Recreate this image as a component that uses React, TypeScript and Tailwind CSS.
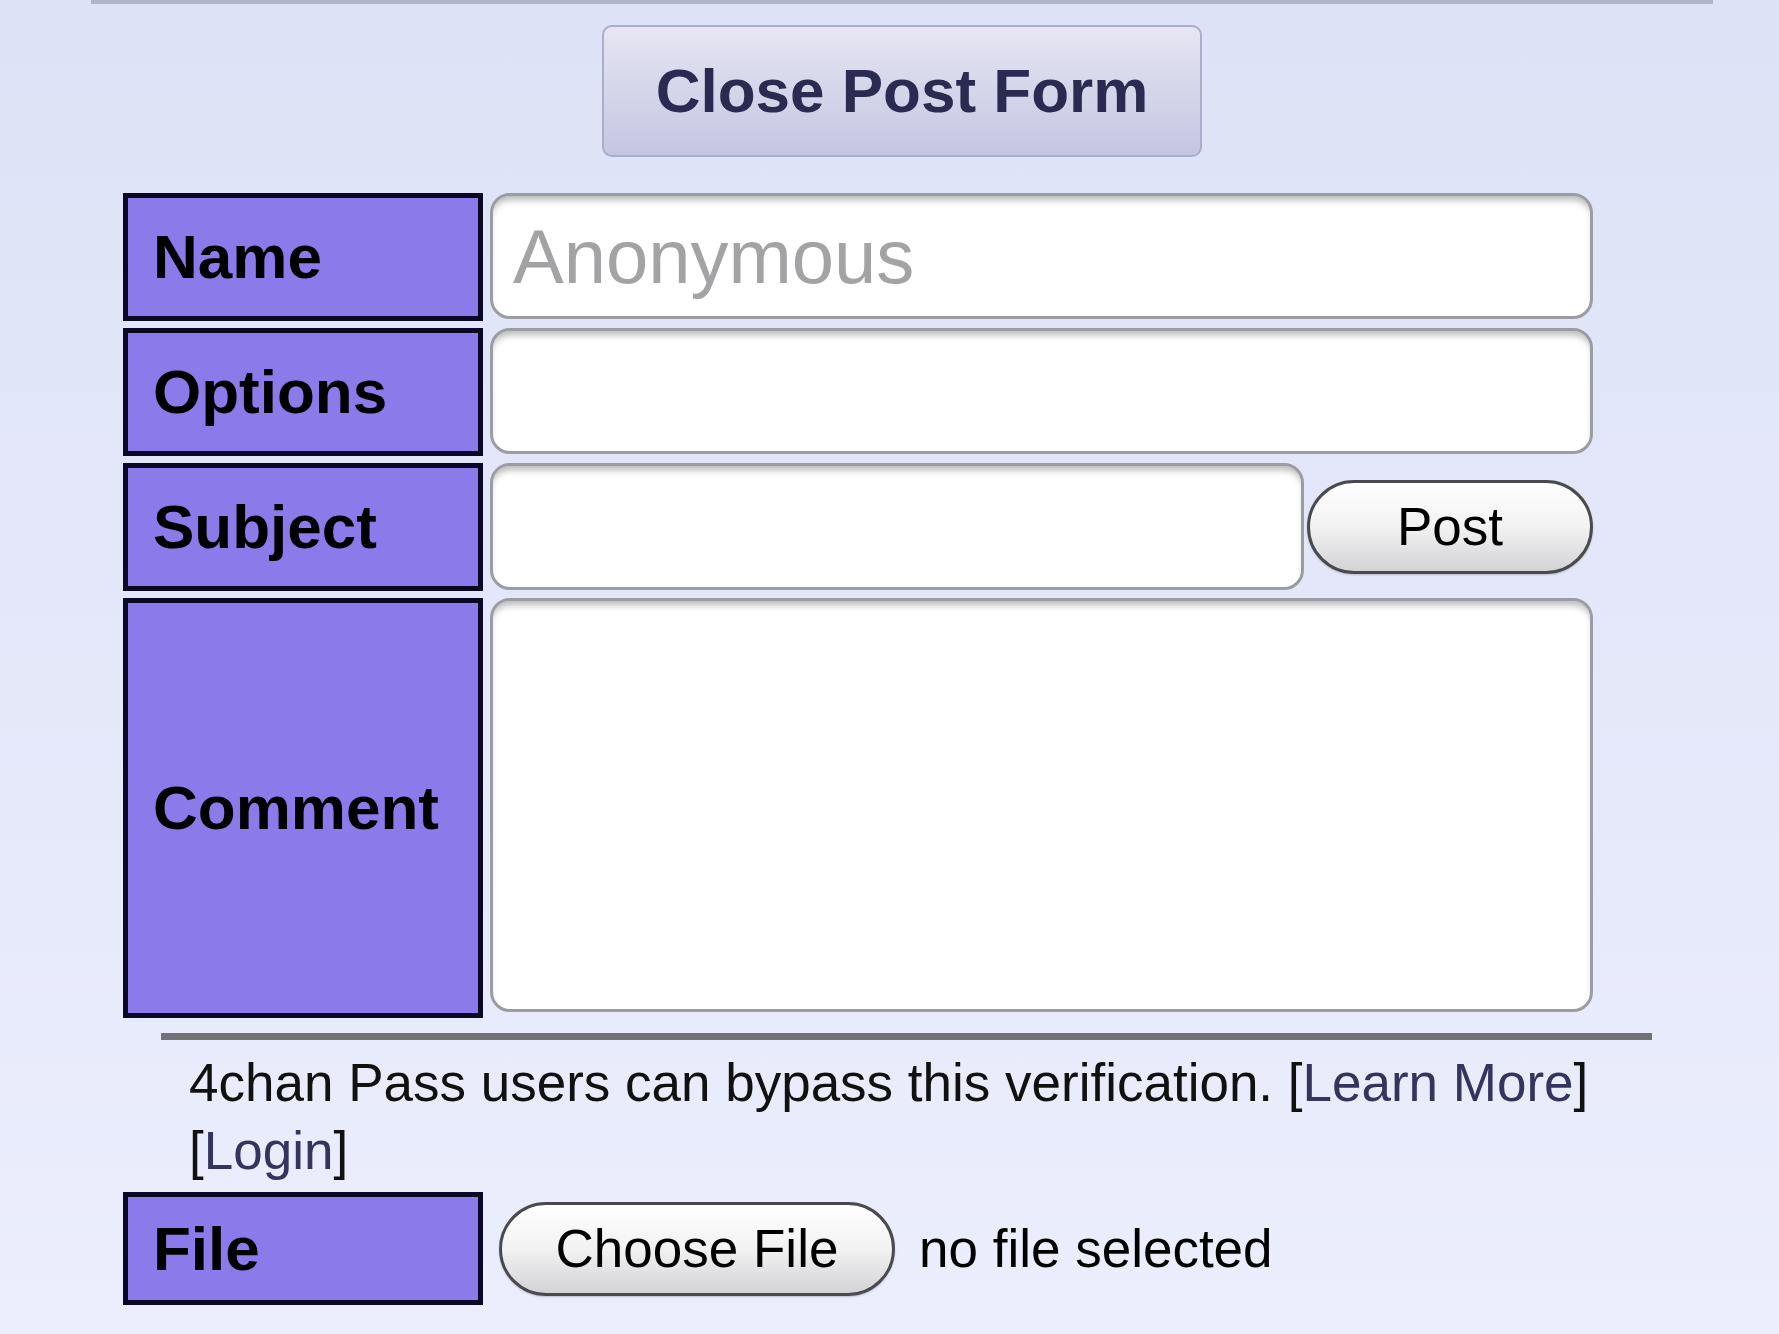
export default function App() {
  const label =
    "w-[360px] shrink-0 border-[5px] border-[#0b0826] bg-[#8b7ae9] flex items-center pl-[25px] text-[62px] font-bold text-black leading-none";
  const field =
    "bg-white border-[3px] border-[#9c9ca3] rounded-[20px] shadow-[inset_0_7px_7px_-3px_rgba(0,0,0,0.28)] outline-none";
  const pill =
    "rounded-full border-[3px] border-[#4a4a4e] bg-gradient-to-b from-white via-[#f2f2f2] to-[#d3d3d7] text-[53px] text-black leading-none shadow-[0_1px_2px_rgba(0,0,0,0.2)]";
  return (
    <div className="min-h-[1334px] w-full bg-gradient-to-b from-[#dde2f6] to-[#eceefd] font-['Liberation_Sans',Arial,sans-serif] overflow-hidden">
      <div className="ml-[91px] w-[1622px] h-[4px] bg-[#b1b6cb]" />
      <div className="ml-[91px] w-[1622px] flex justify-center pt-[21px]">
        <button className="w-[600px] h-[132px] rounded-[10px] border-2 border-[#a9aecb] bg-gradient-to-b from-[#e6e6f4] to-[#c5c5e1] text-[62px] font-bold text-[#2b2b52] leading-none">
          Close Post Form
        </button>
      </div>

      <div className="ml-[123px] mt-[36px] w-[1529px] flex flex-col">
        <div className="flex flex-col gap-[7px] w-[1470px]">
          <div className="flex gap-[7px] items-start">
            <div className={`${label} h-[128px]`}>Name</div>
            <input
              className={`${field} h-[126px] flex-1 pl-[20px] text-[76px] placeholder:text-[#a3a3a6] text-black`}
              placeholder="Anonymous"
            />
          </div>
          <div className="flex gap-[7px] items-start">
            <div className={`${label} h-[128px]`}>Options</div>
            <input className={`${field} h-[126px] flex-1 pl-[20px] text-[53px]`} />
          </div>
          <div className="flex gap-[7px] items-center">
            <div className={`${label} h-[128px]`}>Subject</div>
            <div className="flex-1 flex items-center gap-[3px] self-start">
              <input className={`${field} h-[127px] w-[814px] pl-[20px] text-[53px]`} />
              <button className={`${pill} w-[286px] h-[94px]`}>Post</button>
            </div>
          </div>
          <div className="flex gap-[7px] items-start">
            <div className={`${label} h-[420px]`}>Comment</div>
            <textarea className={`${field} h-[414px] flex-1 resize-none p-[16px] text-[53px]`} />
          </div>
        </div>

        <div className="ml-[38px] mt-[15px] w-[1491px] h-[7px] bg-[#727276]" />

        <div className="ml-[66px] mt-[9px] w-[1463px] text-[53px] leading-[68px] text-[#111]">
          4chan Pass users can bypass this verification. [
          <span className="text-[#34345c]">Learn More</span>] [
          <span className="text-[#34345c]">Login</span>]
        </div>

        <div className="mt-[7px] flex items-center">
          <div className={`${label} h-[113px]`}>File</div>
          <button className={`${pill} ml-[16px] w-[396px] h-[94px]`}>Choose File</button>
          <span className="ml-[24px] text-[53px] text-black leading-none">no file selected</span>
        </div>
      </div>
    </div>
  );
}
